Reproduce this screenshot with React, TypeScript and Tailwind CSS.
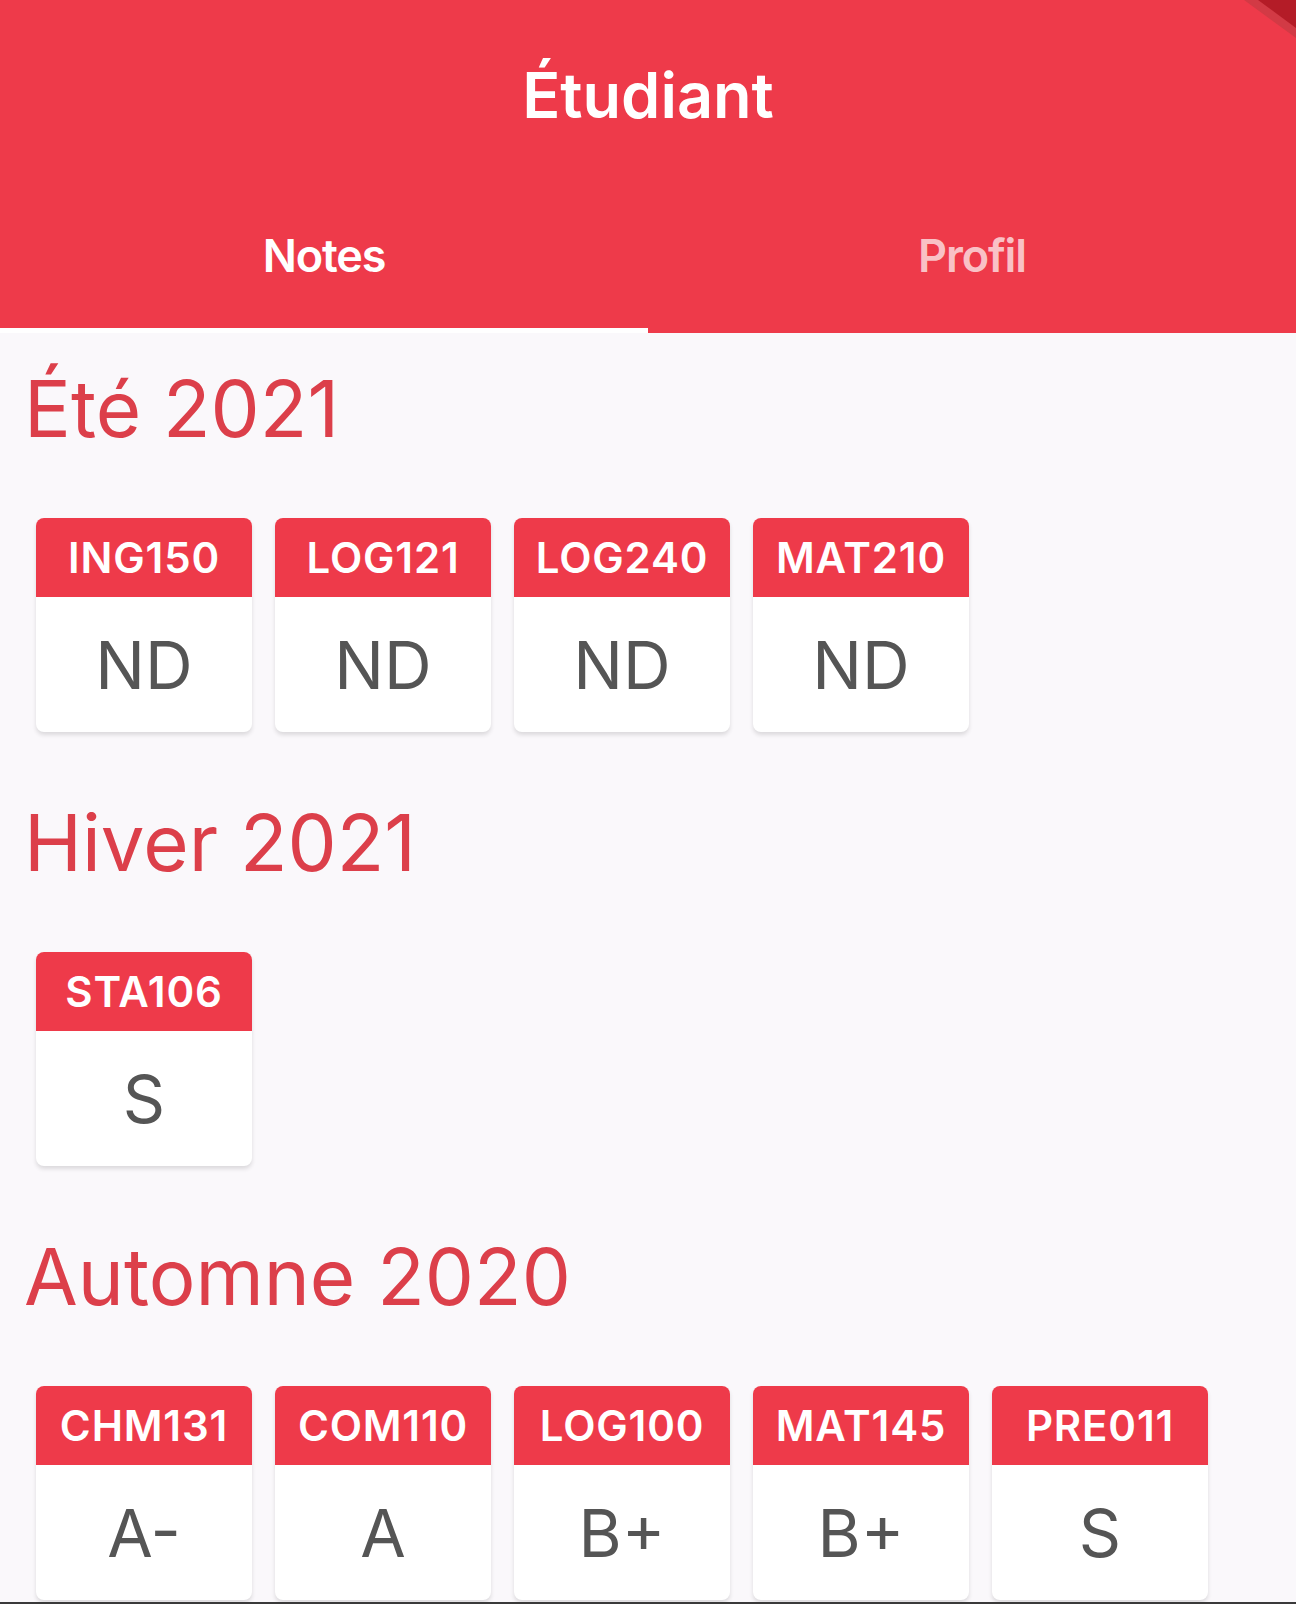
import React, { useState } from 'react';

type Course = { code: string; grade: string };
type Session = { title: string; courses: Course[] };

const SESSIONS: Session[] = [
  {
    title: 'Été 2021',
    courses: [
      { code: 'ING150', grade: 'ND' },
      { code: 'LOG121', grade: 'ND' },
      { code: 'LOG240', grade: 'ND' },
      { code: 'MAT210', grade: 'ND' },
    ],
  },
  {
    title: 'Hiver 2021',
    courses: [{ code: 'STA106', grade: 'S' }],
  },
  {
    title: 'Automne 2020',
    courses: [
      { code: 'CHM131', grade: 'A-' },
      { code: 'COM110', grade: 'A' },
      { code: 'LOG100', grade: 'B+' },
      { code: 'MAT145', grade: 'B+' },
      { code: 'PRE011', grade: 'S' },
    ],
  },
];

const GradeCard = ({ course }: { course: Course }) => (
  <div className="w-[216px] h-[214px] shrink-0 rounded-[8px] bg-white shadow-[0_3px_4px_rgba(0,0,0,0.12)] overflow-hidden flex flex-col">
    <div className="h-[79px] bg-[#ee3a4a] flex items-center justify-center">
      <span className="text-white text-[42px] leading-none font-semibold tracking-[0.02em]">{course.code}</span>
    </div>
    <div className="flex-1 flex items-center justify-center">
      <span className="text-[#555555] text-[66px] leading-none">{course.grade}</span>
    </div>
  </div>
);

export default function App() {
  const [tab, setTab] = useState<'notes' | 'profil'>('notes');

  return (
    <div
      className="w-[1296px] h-[1604px] overflow-hidden bg-[#faf8fb] border-b-2 border-[#3a3a3a]"
      style={{ fontFamily: 'Inter, "Noto Sans", sans-serif' }}
    >
      <header className="relative bg-[#ee3a4a]">
        <div className="h-[191px] flex items-center justify-center">
          <h1 className="text-white text-[63px] leading-none font-semibold">Étudiant</h1>
        </div>
        <div className="flex">
          <button
            onClick={() => setTab('notes')}
            className={`flex-1 h-[142px] flex items-end justify-center pb-[50px] border-b-[5px] ${tab === 'notes' ? 'border-white text-white' : 'border-transparent text-white/70'}`}
          >
            <span className="text-[45px] leading-none font-semibold tracking-tight">Notes</span>
          </button>
          <button
            onClick={() => setTab('profil')}
            className={`flex-1 h-[142px] flex items-end justify-center pb-[50px] border-b-[5px] ${tab === 'profil' ? 'border-white text-white' : 'border-transparent text-white/70'}`}
          >
            <span className="text-[45px] leading-none font-semibold tracking-tight">Profil</span>
          </button>
        </div>
        {/* folded corner in the top right */}
        <svg className="absolute top-0 right-0" width="52" height="40" viewBox="0 0 52 40">
          <polygon points="0,0 52,0 52,38" fill="#d23a45" />
          <polygon points="14,0 52,0 52,28" fill="#b41c27" />
        </svg>
      </header>

      <main className="pt-[37px]">
        {SESSIONS.map((s) => (
          <section key={s.title} className="mb-[72px]">
            <h2 className="pl-[24px] text-[#dc3f4a] text-[78px] leading-none">{s.title}</h2>
            <div className="mt-[70px] pl-[36px] flex gap-[23px]">
              {s.courses.map((c) => (
                <GradeCard key={c.code} course={c} />
              ))}
            </div>
          </section>
        ))}
      </main>
    </div>
  );
}
